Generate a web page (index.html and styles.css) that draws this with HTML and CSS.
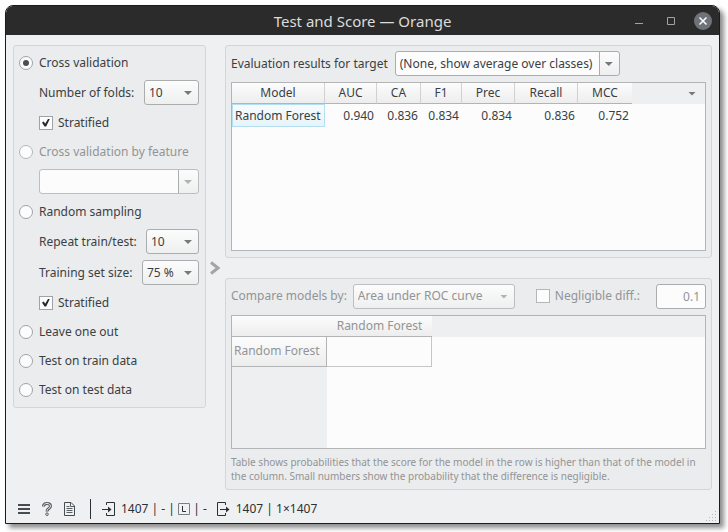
FILE: index.html
```html
<!DOCTYPE html>
<html lang="en">
<head>
<meta charset="utf-8">
<title>Test and Score — Orange</title>
<link rel="stylesheet" href="styles.css">
</head>
<body>
<div class="window">
  <header class="titlebar">
    <h1 class="title">Test and Score — Orange</h1>
    <div class="window-buttons">
      <button class="window-button" type="button" aria-label="Minimize"><svg width="18" height="18" viewBox="0 0 18 18"><path d="M5 11.5h8" stroke="#a3a3a3" fill="none"/></svg></button>
      <button class="window-button" type="button" aria-label="Maximize"><svg width="18" height="18" viewBox="0 0 18 18"><path d="M5.500 5.500h7v7h-7z" stroke="#a3a3a3" fill="none"/></svg></button>
      <button class="window-button" type="button" aria-label="Close"><svg width="18" height="18" viewBox="0 0 18 18"><circle cx="9" cy="9" r="9" fill="#6e7279"/><path d="M5.500 5.500l7 7M12.500 5.500l-7 7" stroke="#fff" stroke-width="1.500" fill="none"/></svg></button>
    </div>
  </header>

  <main class="content">
    <form class="panel sampling">
      <label class="option"><input class="radio" type="radio" name="method" checked>Cross validation</label>
      <div class="field">
        <label for="folds">Number of folds:</label>
        <span class="combo folds"><select id="folds"><option>10</option></select></span>
      </div>
      <label class="option nested"><input class="check" type="checkbox" checked>Stratified</label>
      <label class="option disabled"><input class="radio" type="radio" name="method" disabled>Cross validation by feature</label>
      <div class="field">
        <span class="combo split wide disabled"><select aria-label="Feature" disabled><option></option></select></span>
      </div>
      <label class="option"><input class="radio" type="radio" name="method">Random sampling</label>
      <div class="field">
        <label for="repeats">Repeat train/test:</label>
        <span class="combo repeats"><select id="repeats"><option>10</option></select></span>
      </div>
      <div class="field">
        <label for="size">Training set size:</label>
        <span class="combo size"><select id="size"><option>75 %</option></select></span>
      </div>
      <label class="option nested"><input class="check" type="checkbox" checked>Stratified</label>
      <label class="option"><input class="radio" type="radio" name="method">Leave one out</label>
      <label class="option"><input class="radio" type="radio" name="method">Test on train data</label>
      <label class="option"><input class="radio" type="radio" name="method">Test on test data</label>
    </form>

    <button class="collapse" type="button" aria-label="Toggle controls"><svg width="11" height="14" viewBox="0 0 11 14"><path d="M1 1.500L8 7L1 12.500" fill="none" stroke="#a2a4a6" stroke-width="3"/></svg></button>

    <div class="results">
      <section class="panel">
        <div class="toolbar">
          <label for="target">Evaluation results for target</label>
          <span class="combo split target"><select id="target"><option>(None, show average over classes)</option></select></span>
        </div>
        <div class="table-box">
          <table class="scores">
            <colgroup><col class="w-model"><col class="w-auc"><col class="w-ca"><col class="w-f1"><col class="w-prec"><col class="w-recall"><col class="w-mcc"><col></colgroup>
            <thead>
              <tr><th>Model</th><th>AUC</th><th>CA</th><th>F1</th><th>Prec</th><th>Recall</th><th>MCC</th><th class="rest"><button class="columns-menu" type="button" aria-label="Columns"></button></th></tr>
            </thead>
            <tbody>
              <tr><td class="selected">Random Forest</td><td>0.940</td><td>0.836</td><td>0.834</td><td>0.834</td><td>0.836</td><td>0.752</td><td></td></tr>
            </tbody>
          </table>
        </div>
      </section>

      <section class="panel disabled">
        <div class="toolbar compare">
          <label for="score">Compare models by:</label>
          <span class="combo score"><select id="score" disabled><option>Area under ROC curve</option></select></span>
          <label class="option negligible"><input class="check" type="checkbox" disabled>Negligible diff.:</label>
          <input class="number" type="text" value="0.1" aria-label="Negligible difference" disabled>
        </div>
        <div class="table-box">
          <table class="comparison">
            <colgroup><col class="w-row"><col class="w-cell"><col></colgroup>
            <thead>
              <tr><th></th><th>Random Forest</th><th class="rest"></th></tr>
            </thead>
            <tbody>
              <tr><th class="row-head">Random Forest</th><td class="cell"></td><td></td></tr>
              <tr><td class="rest"></td><td></td><td></td></tr>
            </tbody>
          </table>
        </div>
        <p class="note">Table shows probabilities that the score for the model in the row is higher than that of the model in the column. Small numbers show the probability that the difference is negligible.</p>
      </section>
    </div>
  </main>

  <footer class="statusbar">
    <button class="icon-button" type="button" aria-label="Menu"><svg width="12" height="12" viewBox="0 0 12 12"><path d="M0 2h12M0 6h12M0 10h12" stroke="#474c51" stroke-width="2"/></svg></button>
    <button class="icon-button help" type="button" aria-label="Help"><svg width="10" height="14" viewBox="0 0 10 14"><path d="M1.500 4.500C1.500 2.400 3 1.500 4.900 1.500C7 1.500 8.500 2.500 8.500 4.200C8.500 6.500 5 6.500 5 9.400" fill="none" stroke="#5a5f64" stroke-width="3"/><path d="M1.500 3.700C1.800 2.400 3 1.500 4.900 1.500C7 1.500 8.500 2.500 8.500 4.200C8.500 6.500 5 6.500 5 8.700" fill="none" stroke="#eff0f1" stroke-width="1"/><circle cx="5" cy="12.200" r="1.300" fill="#eff0f1" stroke="#5a5f64"/></svg></button>
    <button class="icon-button" type="button" aria-label="Report"><svg width="11" height="14" viewBox="0 0 11 14"><path d="M.5 .5H7L10.500 4V13.500H.5z" fill="none" stroke="#474c51"/><path d="M6.500 1v3.500H10M2.500 4.500h3M2.500 6.500h6M2.500 8.500h6M2.500 10.500h6" fill="none" stroke="#5a5f64"/></svg></button>
    <span class="divider"></span>
    <svg class="io" width="14" height="14" viewBox="0 0 14 14"><path d="M4.500 3V.5H12.500V13.500H4.500V11" fill="none" stroke="#2b3035"/><path d="M0 7.500h7" stroke="#2b3035"/><path d="M6 4.500L9.500 7.500L6 10.500z" fill="#2b3035"/></svg>
    <span class="counts">1407 | - | <svg width="12" height="12" viewBox="0 0 12 12"><path d="M.5 .5h11v11H.5z" fill="none" stroke="#7a7f84"/><path d="M4.500 3v5.500h3.500" fill="none" stroke="#2b3035"/></svg> | -</span>
    <svg class="io out" width="14" height="14" viewBox="0 0 14 14"><path d="M8.500 3V.5H.5V13.500H8.500V11" fill="none" stroke="#2b3035"/><path d="M3 7.500h7" stroke="#2b3035"/><path d="M9 4.500L12.500 7.500L9 10.500z" fill="#2b3035"/></svg>
    <span class="counts">1407 | 1×1407</span>
    <svg class="grip" width="11" height="11" viewBox="0 0 11 11"><path d="M9 0h1v1h-1zM9 3h1v1h-1zM9 6h1v1h-1zM9 9h1v1h-1zM6 3h1v1h-1zM6 6h1v1h-1zM6 9h1v1h-1zM3 6h1v1h-1zM3 9h1v1h-1zM0 9h1v1h-1z" fill="#b4b6b8"/></svg>
  </footer>
</div>
</body>
</html>
```

FILE: styles.css
```css
* {
  box-sizing: border-box;
}

:root {
  --text: #3a3f44;
  --muted: #929496;
  --window: #eff0f1;
  --panel: #ebeced;
  --line: #b2b4b5;
  --header: linear-gradient(#fcfcfc, #ededee);
}

body {
  display: flex;
  min-height: 100vh;
  margin: 0;
  padding: 5px 8px 8px 5px;
  background: #fff;
  color: var(--text);
  font: 12px/16px "Noto Sans", "Liberation Sans", sans-serif;
}

button,
input,
select {
  margin: 0;
  color: inherit;
  font: inherit;
}

button {
  padding: 0;
  border: 0;
  background: none;
}

svg {
  display: block;
}

.window {
  display: flex;
  flex: 1;
  flex-direction: column;
  min-width: 0;
  border: 1px solid #1c1c1c;
  border-radius: 8px 8px 0 0;
  background: var(--window);
  box-shadow: 4px 4px 5px rgba(0, 0, 0, 0.45);
}

.titlebar {
  position: relative;
  display: flex;
  align-items: center;
  justify-content: center;
  height: 29px;
  border-radius: 7px 7px 0 0;
  background: #2b2b2b;
}

.title {
  margin: 0;
  color: #dcdcdc;
  font-size: 15px;
  font-weight: 400;
  line-height: 20px;
}

.window-buttons {
  position: absolute;
  right: 7px;
  display: flex;
  gap: 14px;
}

.content {
  display: flex;
  flex: 1;
  padding: 10px 7px 0;
}

.panel {
  display: flex;
  flex-direction: column;
  gap: 6px;
  padding: 5px 5px 6px;
  border: 1px solid #d3d5d6;
  border-radius: 3px;
  background: var(--panel);
}

.disabled {
  color: var(--muted);
}

.sampling {
  align-self: flex-start;
  width: 193px;
  padding: 5px 6px 6px 5px;
}

.option {
  display: flex;
  align-items: center;
  gap: 6px;
  height: 23px;
}

.nested {
  padding-left: 20px;
  gap: 5px;
}

.field {
  display: flex;
  align-items: center;
  justify-content: space-between;
  padding-left: 20px;
}

.radio,
.check {
  display: grid;
  place-items: center;
  width: 14px;
  height: 14px;
  border: 1px solid #a0a3a5;
  background: #fcfcfc;
  appearance: none;
}

.radio {
  border-radius: 50%;
}

.radio:checked::after {
  width: 6px;
  height: 6px;
  border-radius: 50%;
  background: #4b4f53;
  content: "";
}

.check:checked::after {
  width: 8px;
  height: 8px;
  background: #25292d;
  clip-path: polygon(0 50%, 22% 38%, 40% 66%, 78% 0, 100% 0, 52% 100%, 32% 100%);
  content: "";
}

.check:disabled,
.radio:disabled {
  border-color: #b4b6b8;
}

.combo {
  position: relative;
  display: block;
}

.combo select {
  display: block;
  width: 100%;
  height: 25px;
  padding: 0 20px 0 4px;
  border: 1px solid #aaacae;
  border-radius: 3px;
  background: linear-gradient(#fcfcfc, #eeefef);
  appearance: none;
}

.combo::after,
.columns-menu::after {
  width: 8px;
  height: 4px;
  background: #75797c;
  clip-path: polygon(0 0, 100% 0, 50% 100%);
  content: "";
}

.combo::after {
  position: absolute;
  top: 11px;
  right: 7px;
  pointer-events: none;
}

.combo select:disabled {
  border-color: #bcbebf;
  opacity: 1;
}

.combo:has(select:disabled)::after {
  background: #b0b2b4;
}

.combo.split select {
  background: linear-gradient(#aaacae, #aaacae) right 19px top / 1px 100% no-repeat, linear-gradient(#fcfcfc, #eeefef) right / 19px 100% no-repeat, #fcfcfc;
}

.folds {
  width: 55px;
}

.repeats {
  width: 53px;
}

.size {
  width: 57px;
}

.wide {
  width: 100%;
}

.target {
  width: 225px;
}

.score {
  width: 162px;
}

.collapse {
  display: grid;
  place-items: center;
  width: 19px;
}

.results {
  display: grid;
  flex: 1;
  grid-template-rows: 1fr 1fr;
  gap: 20px;
  min-width: 0;
}

.toolbar {
  display: flex;
  align-items: center;
  gap: 7px;
}

.compare {
  gap: 6px;
}

.negligible {
  gap: 5px;
  margin-left: auto;
}

.number {
  width: 50px;
  height: 25px;
  margin-left: 10px;
  padding: 0 5px;
  border: 1px solid #aaacae;
  border-radius: 3px;
  background: #fcfcfc;
  text-align: right;
}

.table-box {
  display: flex;
  flex: 1;
  align-items: flex-start;
  border: 1px solid var(--line);
  background: #fcfcfc;
}

table {
  width: 100%;
  table-layout: fixed;
  border-collapse: separate;
  border-spacing: 0;
}

th,
td {
  padding: 0 3px;
  font-weight: 400;
}

thead th {
  height: 21px;
  border-bottom: 1px solid var(--line);
  background: var(--header);
}

.scores thead th {
  border-right: 1px solid #cfd1d2;
}

.scores thead th:nth-child(7) {
  border-right: 0;
}

.scores td {
  height: 23px;
  text-align: right;
}

.scores .selected {
  padding: 0 2px;
  border: 1px solid #b3dff0;
  background: linear-gradient(#f7fbfd, #e6f4fa);
  text-align: left;
}

thead .rest,
.scores thead .rest,
.rest {
  border: 0;
  background: #eeeff0;
}

.columns-menu {
  display: grid;
  place-items: center;
  width: 20px;
  height: 20px;
  margin-left: auto;
}

.w-model {
  width: 93px;
}

.w-auc {
  width: 52px;
}

.w-ca {
  width: 44px;
}

.w-f1 {
  width: 41px;
}

.w-prec {
  width: 53px;
}

.w-recall {
  width: 63px;
}

.w-mcc {
  width: 54px;
}

.comparison {
  align-self: stretch;
}

.w-row {
  width: 95px;
}

.w-cell {
  width: 105px;
}

.row-head {
  height: 30px;
  padding: 0 2px;
  border-right: 1px solid var(--line);
  border-bottom: 1px solid var(--line);
  background: var(--header);
  text-align: left;
}

.cell {
  border-right: 1px solid #c4c6c7;
  border-bottom: 1px solid #c4c6c7;
}

.note {
  margin: 0;
  font-size: 10px;
  line-height: 14px;
}

.statusbar {
  position: relative;
  display: flex;
  align-items: center;
  height: 33px;
  padding: 4px 12px 0;
  color: #2b3035;
}

.icon-button {
  margin-right: 12px;
}

.divider {
  width: 1px;
  height: 20px;
  margin: 0 11px 0 3px;
  background: #2b3035;
}

.io {
  margin-right: 5px;
}

.out {
  margin-left: 10px;
}

.counts {
  white-space: pre;
}

.counts svg {
  display: inline-block;
  vertical-align: -2px;
}

.grip {
  position: absolute;
  right: 2px;
  bottom: 1px;
}
```
